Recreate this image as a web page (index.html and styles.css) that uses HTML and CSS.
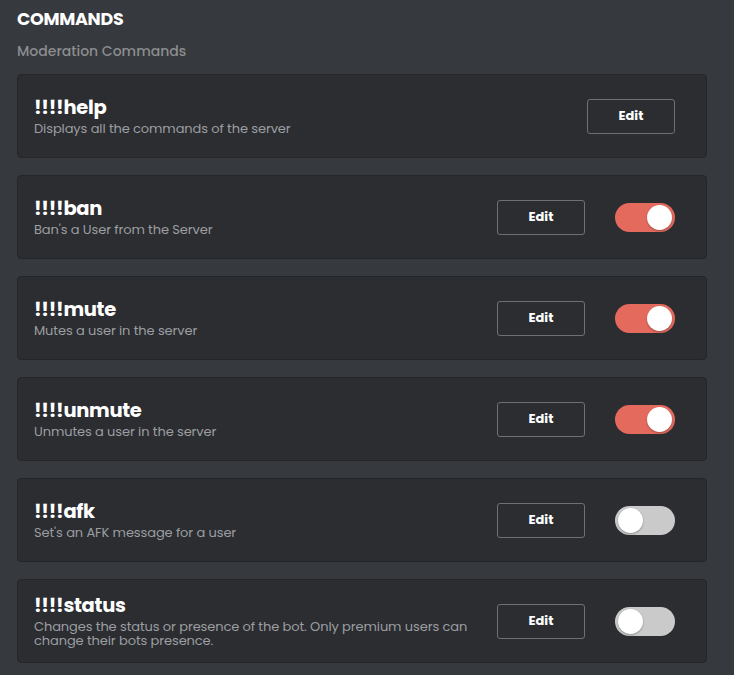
FILE: index.html
```html
<!DOCTYPE html>
<html lang="en">
<head>
<meta charset="utf-8">
<title>Commands</title>
<link rel="stylesheet" href="styles.css">
</head>
<body>
<main class="page">
  <h1 class="heading">COMMANDS</h1>
  <h2 class="subheading">Moderation Commands</h2>
  <div class="list">
    <div class="card">
      <div class="info">
        <div class="name">!!!!help</div>
        <div class="desc">Displays all the commands of the server</div>
      </div>
      <div class="actions">
        <button class="edit">Edit</button>
      </div>
    </div>
    <div class="card">
      <div class="info">
        <div class="name">!!!!ban</div>
        <div class="desc">Ban's a User from the Server</div>
      </div>
      <div class="actions">
        <button class="edit">Edit</button>
        <span class="toggle on"><span class="knob"></span></span>
      </div>
    </div>
    <div class="card">
      <div class="info">
        <div class="name">!!!!mute</div>
        <div class="desc">Mutes a user in the server</div>
      </div>
      <div class="actions">
        <button class="edit">Edit</button>
        <span class="toggle on"><span class="knob"></span></span>
      </div>
    </div>
    <div class="card">
      <div class="info">
        <div class="name">!!!!unmute</div>
        <div class="desc">Unmutes a user in the server</div>
      </div>
      <div class="actions">
        <button class="edit">Edit</button>
        <span class="toggle on"><span class="knob"></span></span>
      </div>
    </div>
    <div class="card">
      <div class="info">
        <div class="name">!!!!afk</div>
        <div class="desc">Set's an AFK message for a user</div>
      </div>
      <div class="actions">
        <button class="edit">Edit</button>
        <span class="toggle"><span class="knob"></span></span>
      </div>
    </div>
    <div class="card">
      <div class="info">
        <div class="name">!!!!status</div>
        <div class="desc">Changes the status or presence of the bot. Only premium users can change their bots presence.</div>
      </div>
      <div class="actions">
        <button class="edit">Edit</button>
        <span class="toggle"><span class="knob"></span></span>
      </div>
    </div>
  </div>
</main>
</body>
</html>
```
FILE: styles.css
```css
* { box-sizing: border-box; }
html, body { margin: 0; padding: 0; }
body {
  background: #36393d;
  font-family: "Poppins", "Inter", "Open Sans", sans-serif;
  color: #ffffff;
}
.page {
  padding: 8px 27px 0 17px;
}
.heading {
  margin: 0;
  font-size: 17.5px;
  font-weight: 700;
  line-height: 22px;
  letter-spacing: -0.3px;
}
.subheading {
  margin: 12px 0 0;
  font-size: 14px;
  font-weight: 500;
  line-height: 18px;
  color: #8b8d90;
}
.list {
  margin-top: 14px;
  display: flex;
  flex-direction: column;
  gap: 17px;
}
.card {
  height: 84px;
  background: #2b2d31;
  border: 1px solid #24262a;
  border-radius: 4px;
  display: flex;
  align-items: center;
  justify-content: space-between;
  padding: 0 31px 0 16px;
}
.info { max-width: 450px; }
.name {
  font-size: 19.5px;
  font-weight: 700;
  line-height: 24px;
  letter-spacing: -0.3px;
}
.desc {
  margin-top: 2px;
  font-size: 13px;
  line-height: 14px;
  color: #9c9ea1;
  letter-spacing: -0.1px;
}
.actions {
  display: flex;
  align-items: center;
  gap: 30px;
}
.edit {
  width: 88px;
  height: 35px;
  background: transparent;
  border: 1px solid #6d7074;
  border-radius: 3px;
  color: #ffffff;
  font-family: inherit;
  font-size: 13px;
  font-weight: 700;
  padding: 0;
}
.toggle {
  position: relative;
  display: block;
  width: 60px;
  height: 29px;
  border-radius: 15px;
  background: #cacaca;
}
.toggle.on { background: #e46a5e; }
.knob {
  position: absolute;
  top: 2px;
  left: 3px;
  width: 25px;
  height: 25px;
  border-radius: 50%;
  background: #ffffff;
  box-shadow: 0 1px 2px rgba(0,0,0,0.3);
}
.toggle.on .knob { left: auto; right: 3px; }
```
